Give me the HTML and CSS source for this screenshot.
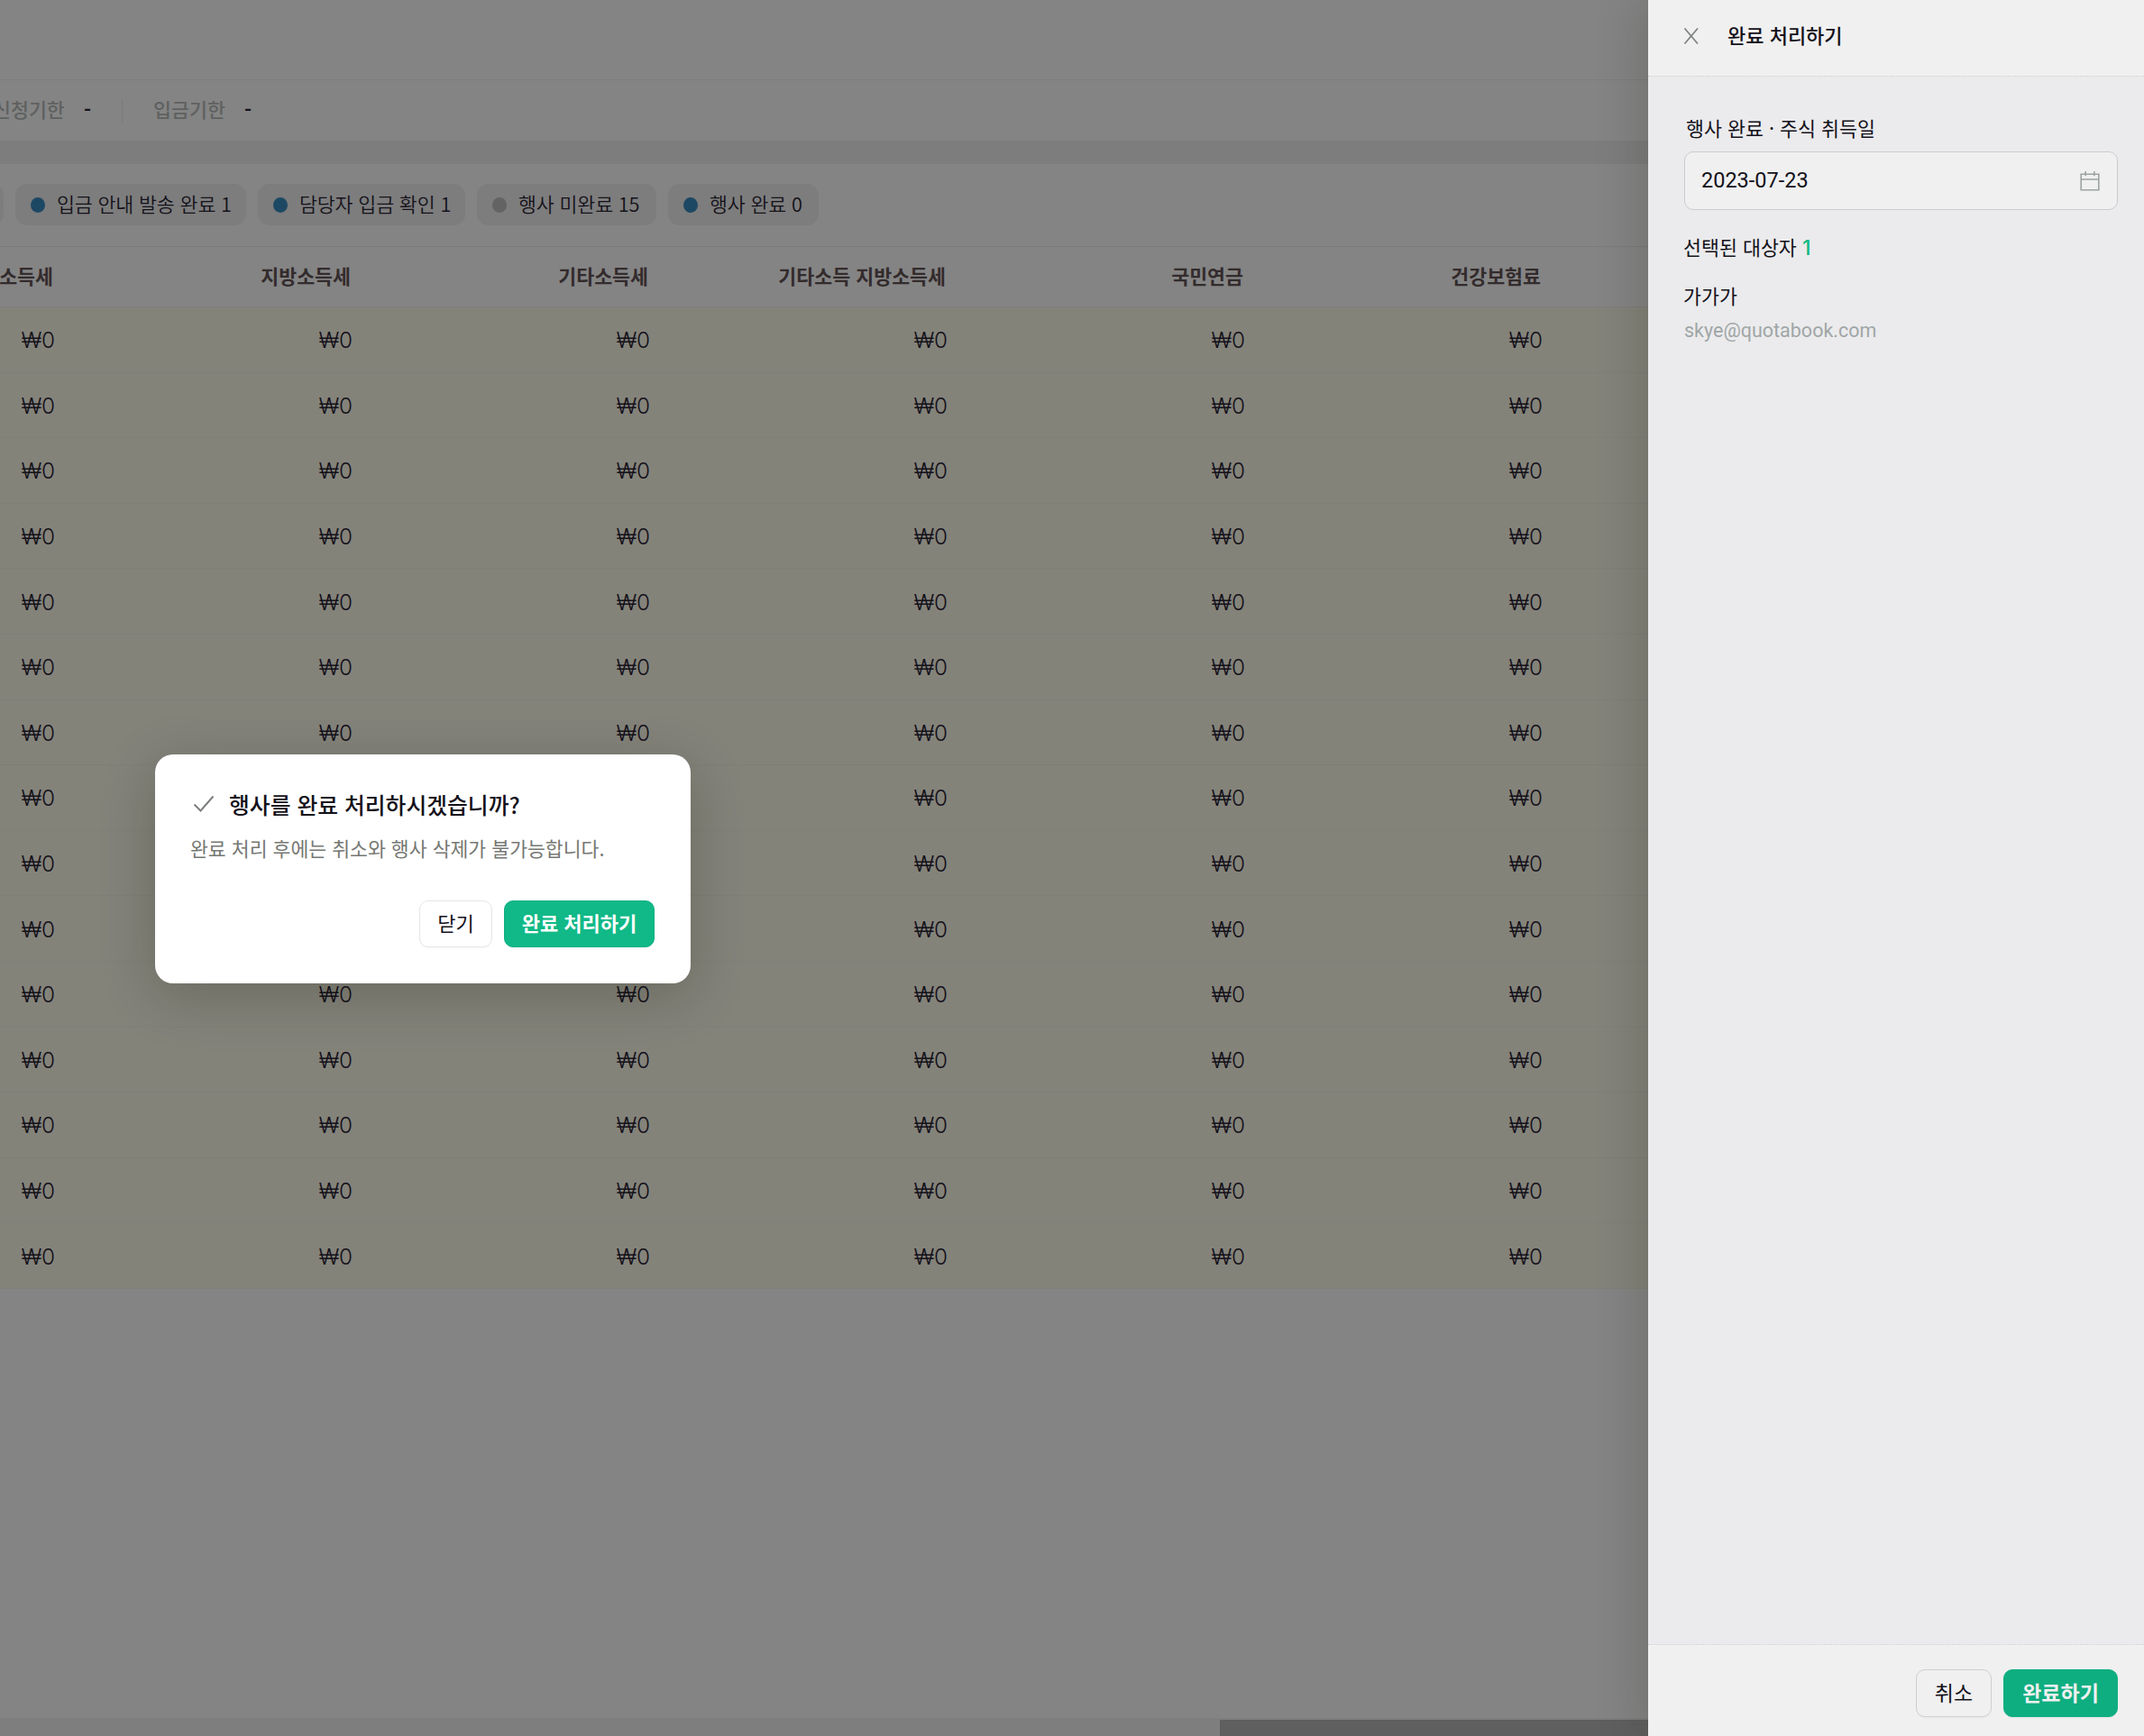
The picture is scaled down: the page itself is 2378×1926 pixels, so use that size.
FILE: index.html
```
<!DOCTYPE html>
<html lang="ko">
<head>
  <meta charset="UTF-8">
  <title>완료 처리하기</title>
  <link rel="stylesheet" href="styles.css">
</head>
<body>
  <div class="app">
    <main class="page">
      <div class="topbar"></div>

      <div class="info">
        <div class="info-item"><span class="info-label">신청기한</span><span class="info-value">-</span></div>
        <div class="info-item"><span class="info-label">입금기한</span><span class="info-value">-</span></div>
      </div>
      <div class="band"></div>

      <div class="filters">
        <div class="pill pill-cut"></div>
        <div class="pill pill-sent"><i class="dot"></i><span>입금 안내 발송 완료 1</span></div>
        <div class="pill pill-checked"><i class="dot"></i><span>담당자 입금 확인 1</span></div>
        <div class="pill pill-open"><i class="dot gray"></i><span>행사 미완료 15</span></div>
        <div class="pill pill-done"><i class="dot"></i><span>행사 완료 0</span></div>
      </div>

      <div class="table">
        <div class="row head"><span>소득세</span><span>지방소득세</span><span>기타소득세</span><span>기타소득 지방소득세</span><span>국민연금</span><span>건강보험료</span></div>
        <div class="row"><span>₩0</span><span>₩0</span><span>₩0</span><span>₩0</span><span>₩0</span><span>₩0</span></div>
        <div class="row"><span>₩0</span><span>₩0</span><span>₩0</span><span>₩0</span><span>₩0</span><span>₩0</span></div>
        <div class="row"><span>₩0</span><span>₩0</span><span>₩0</span><span>₩0</span><span>₩0</span><span>₩0</span></div>
        <div class="row"><span>₩0</span><span>₩0</span><span>₩0</span><span>₩0</span><span>₩0</span><span>₩0</span></div>
        <div class="row"><span>₩0</span><span>₩0</span><span>₩0</span><span>₩0</span><span>₩0</span><span>₩0</span></div>
        <div class="row"><span>₩0</span><span>₩0</span><span>₩0</span><span>₩0</span><span>₩0</span><span>₩0</span></div>
        <div class="row"><span>₩0</span><span>₩0</span><span>₩0</span><span>₩0</span><span>₩0</span><span>₩0</span></div>
        <div class="row"><span>₩0</span><span>₩0</span><span>₩0</span><span>₩0</span><span>₩0</span><span>₩0</span></div>
        <div class="row"><span>₩0</span><span>₩0</span><span>₩0</span><span>₩0</span><span>₩0</span><span>₩0</span></div>
        <div class="row"><span>₩0</span><span>₩0</span><span>₩0</span><span>₩0</span><span>₩0</span><span>₩0</span></div>
        <div class="row"><span>₩0</span><span>₩0</span><span>₩0</span><span>₩0</span><span>₩0</span><span>₩0</span></div>
        <div class="row"><span>₩0</span><span>₩0</span><span>₩0</span><span>₩0</span><span>₩0</span><span>₩0</span></div>
        <div class="row"><span>₩0</span><span>₩0</span><span>₩0</span><span>₩0</span><span>₩0</span><span>₩0</span></div>
        <div class="row"><span>₩0</span><span>₩0</span><span>₩0</span><span>₩0</span><span>₩0</span><span>₩0</span></div>
        <div class="row"><span>₩0</span><span>₩0</span><span>₩0</span><span>₩0</span><span>₩0</span><span>₩0</span></div>
      </div>

      <div class="scrollbar"><div class="thumb"></div></div>
    </main>

    <aside class="drawer">
      <header class="drawer-head">
        <svg class="close" width="18" height="18" viewBox="0 0 18 18"><path d="M1.5 0.5L16 17.5M16 0.5L1.5 17.5"/></svg>
        <h2>완료 처리하기</h2>
      </header>
      <div class="drawer-body">
        <label class="field-label">행사 완료 · 주식 취득일</label>
        <div class="date">
          <span class="date-text">2023-07-23</span>
          <svg class="calendar" width="22" height="22" viewBox="0 0 22 22"><path d="M1.2 3.2H20.8V20.8H1.2ZM1.2 9H20.8M6.2 0V5M15.8 0V5"/></svg>
        </div>
        <p class="selected">선택된 대상자 <b>1</b></p>
        <p class="name">가가가</p>
        <p class="email">skye@quotabook.com</p>
      </div>
      <footer class="drawer-foot">
        <button class="btn cancel">취소</button>
        <button class="btn primary submit">완료하기</button>
      </footer>
    </aside>
  </div>

  <div class="modal">
    <div class="modal-title">
      <svg class="check" width="24" height="20" viewBox="0 0 24 20"><path d="M1.5 10.5L8.5 17.5L22.5 1.5"/></svg>
      <h3>행사를 완료 처리하시겠습니까?</h3>
    </div>
    <p class="modal-text">완료 처리 후에는 취소와 행사 삭제가 불가능합니다.</p>
    <div class="modal-actions">
      <button class="btn dismiss">닫기</button>
      <button class="btn primary confirm">완료 처리하기</button>
    </div>
  </div>
</body>
</html>
```

FILE: styles.css
```
* {
  box-sizing: border-box;
}

body {
  margin: 0;
  overflow: hidden;
  font-family: "Noto Sans CJK KR", sans-serif;
  font-size: 21.7px;
  line-height: 30px;
  color: #14111a;
}

h2, h3, p {
  margin: 0;
  font-weight: 500;
}

.app {
  display: flex;
  width: 2378px;
  height: 1926px;
}

.page {
  display: flex;
  flex-direction: column;
  width: 1828px;
  background: #848484;
  overflow: hidden;
}

.topbar {
  height: 89px;
  border-bottom: 1px solid #7d7d7a;
}

.info {
  display: flex;
  align-items: center;
  height: 67px;
  margin-left: -8px;
}

.info-item {
  display: flex;
  align-items: center;
  height: 27px;
  padding-bottom: 3px;
}

.info-item + .info-item {
  margin-left: 34px;
  padding-left: 34px;
  border-left: 1px solid #7b7b7b;
}

.info-label {
  width: 101px;
  font-weight: 500;
  color: #5f6160;
}

.info-value {
  font-weight: 700;
}

.band {
  height: 26px;
  background: #7d7d7d;
}

.filters {
  display: flex;
  gap: 13px;
  height: 92px;
  padding-top: 22px;
  border-bottom: 1px solid #7b7b7d;
}

.pill {
  display: flex;
  align-items: center;
  gap: 13px;
  height: 46px;
  padding-left: 17px;
  border-radius: 13px;
  background: #7d7d7d;
  white-space: nowrap;
}

.pill span {
  padding-bottom: 2px;
  font-weight: 350;
  letter-spacing: -0.15px;
}

.pill-cut {
  width: 44px;
  margin-left: -40px;
}

.pill-sent {
  width: 256px;
}

.pill-checked {
  width: 230px;
}

.pill-open {
  width: 199px;
}

.pill-done {
  width: 167px;
}

.dot {
  width: 16px;
  height: 17px;
  border-radius: 50%;
  background: #1d4864;
}

.dot.gray {
  background: #636363;
}

.row {
  display: grid;
  grid-template-columns: 60px repeat(5, 330px);
  align-items: center;
  height: 72.6px;
  background: #84837a;
  border-bottom: 1px solid #807f78;
  font-family: Inter, "Noto Sans CJK KR", sans-serif;
  font-size: 24.3px;
  font-weight: 350;
}

.row span {
  display: flex;
  justify-content: flex-end;
  padding-top: 1px;
  margin-right: -1px;
  white-space: nowrap;
}

.row.head {
  height: 67px;
  padding-bottom: 3px;
  background: none;
  border-bottom-color: #7c7b7d;
  font-family: "Noto Sans CJK KR", sans-serif;
  font-size: 21.7px;
  font-weight: 700;
  color: #332b2c;
}

.row.head span {
  margin-right: 1px;
}

.scrollbar {
  height: 20px;
  margin-top: auto;
  padding-top: 2px;
  background: #7e7e7e;
}

.thumb {
  height: 18px;
  margin-left: 1353px;
  background: #5f5f5f;
}

.drawer {
  display: flex;
  flex-direction: column;
  width: 550px;
  background: #ebebed;
  box-shadow: -9px 0 48px rgba(20, 20, 0, 0.16);
}

.drawer-head {
  display: flex;
  align-items: center;
  height: 85px;
  padding: 0 0 5px 39px;
  background: #f0f0f0;
  border-bottom: 1px dotted #ccc;
}

.drawer-head h2 {
  margin-left: 31px;
  padding-bottom: 4px;
  font-size: 22px;
}

.close {
  fill: none;
  stroke: #7e8282;
  stroke-width: 1.7;
}

.drawer-body {
  flex: 1;
  padding: 42px 29px 0 39px;
}

.field-label {
  display: block;
  padding-left: 3px;
}

.date {
  display: flex;
  align-items: center;
  justify-content: space-between;
  width: 481px;
  height: 65px;
  margin: 11px 0 0 1px;
  padding: 0 19px 0 18px;
  background: #f0f0f0;
  border: 1px solid #cacbcd;
  border-radius: 10px;
}

.date-text {
  padding-bottom: 1px;
  font-family: Roboto, sans-serif;
  font-size: 23.5px;
}

.calendar {
  fill: none;
  stroke: #9da3a3;
  stroke-width: 1.6;
}

.selected {
  margin-top: 26px;
  font-weight: 400;
}

.selected b {
  font-family: Inter, sans-serif;
  font-size: 23px;
  font-weight: 500;
  line-height: 1;
  color: #10b981;
}

.name {
  margin-top: 24px;
  font-weight: 400;
}

.email {
  margin: 9px 0 0 1px;
  font-family: Roboto, sans-serif;
  font-size: 21.5px;
  font-weight: 400;
  color: #a0a6a6;
}

.drawer-foot {
  display: flex;
  justify-content: flex-end;
  gap: 13px;
  height: 102px;
  padding: 27px 29px 0 0;
  background: #f0f0f0;
  border-top: 1px dotted #ccc;
}

.btn {
  height: 53px;
  padding: 0 0 4px;
  border: 1px solid #e6e6e6;
  border-radius: 10px;
  background: transparent;
  box-shadow: 0 2px 0 rgba(0, 0, 0, 0.02);
  font: inherit;
  font-size: 22px;
  color: inherit;
}

.btn.primary {
  border-color: #10ae80;
  background: #10b987;
  font-weight: 700;
  color: #fff;
}

.btn.cancel {
  width: 84px;
  border-color: #cfcfd1;
  font-size: 23px;
}

.btn.submit {
  width: 127px;
  background: #0fae80;
  font-size: 23px;
  color: #f0f0f0;
}

.modal {
  position: absolute;
  left: 172px;
  top: 837px;
  width: 594px;
  height: 254px;
  padding: 38px 40px;
  border-radius: 20px;
  background: #fff;
  box-shadow: 0 14px 60px rgba(20, 20, 0, 0.22);
}

.modal-title {
  display: flex;
  align-items: center;
  height: 34px;
  padding-left: 2px;
}

.modal-title h3 {
  margin-left: 16px;
  font-size: 24.8px;
}

.check {
  fill: none;
  stroke: #7b807e;
  stroke-width: 2;
}

.modal-text {
  margin: 17px 0 0 -1px;
  font-size: 21.6px;
  font-weight: 400;
  color: #767873;
}

.modal-actions {
  display: flex;
  justify-content: flex-end;
  gap: 13px;
  margin-top: 43px;
}

.modal-actions .btn {
  height: 52px;
}

.dismiss {
  width: 81px;
}

.confirm {
  width: 167px;
}
```
